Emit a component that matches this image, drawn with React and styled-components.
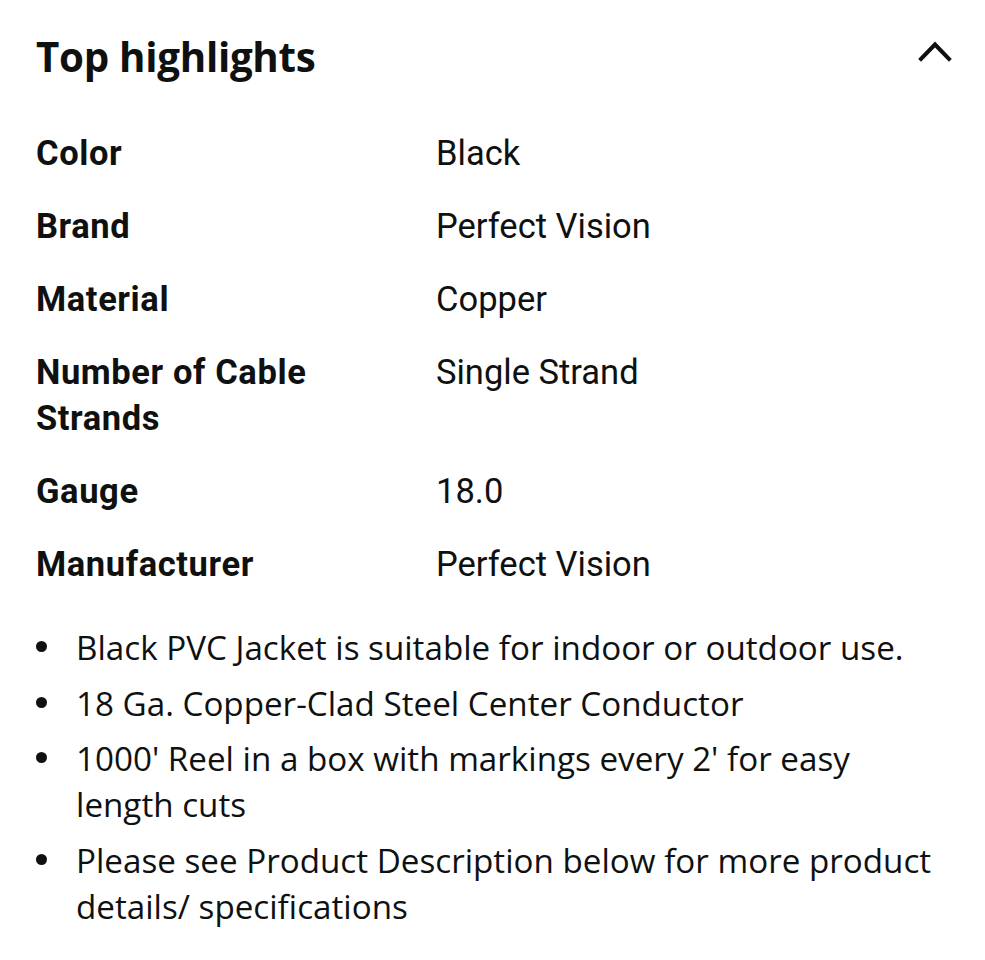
import React from 'react';
import styled, { createGlobalStyle } from 'styled-components';

const GlobalStyle = createGlobalStyle`
  body {
    margin: 0;
    background: #ffffff;
    color: #0f1111;
    font-family: "Open Sans", "Noto Sans", sans-serif;
  }
`;

const Wrapper = styled.div`
  width: 985px;
  padding: 29px 35px 0 36px;
  box-sizing: border-box;
`;

const Header = styled.div`
  display: flex;
  align-items: center;
  justify-content: space-between;
  height: 56px;
`;

const Title = styled.h2`
  margin: 0;
  font-size: 40.3px;
  font-weight: 700;
  line-height: 56px;
  letter-spacing: -0.3px;
`;

const Toggle = styled.button`
  display: flex;
  align-items: center;
  justify-content: center;
  width: 40px;
  height: 40px;
  padding: 0;
  border: 0;
  background: none;
  margin: -12px -5px 0 0;
  cursor: pointer;
`;

const Table = styled.div`
  display: grid;
  grid-template-columns: 400px 1fr;
  row-gap: 27px;
  margin-top: 45px;
  font-family: Roboto, "Noto Sans", sans-serif;
  font-size: 34.5px;
  line-height: 46px;
`;

const Label = styled.div`
  font-weight: 700;
  letter-spacing: 0.6px;
  padding-right: 80px;
`;

const Value = styled.div`
  font-weight: 400;
`;

const Bullets = styled.ul`
  list-style: none;
  margin: 38px 0 0;
  padding: 0;
  display: flex;
  flex-direction: column;
  gap: 9.5px;
`;

const Bullet = styled.li`
  position: relative;
  padding-left: 40px;
  font-size: 33.2px;
  line-height: 46px;

  &::before {
    content: '';
    position: absolute;
    left: 0;
    top: 16px;
    width: 11px;
    height: 11px;
    border-radius: 50%;
    background: #0f1111;
  }
`;

const specs = [
  ['Color', 'Black'],
  ['Brand', 'Perfect Vision'],
  ['Material', 'Copper'],
  ['Number of Cable Strands', 'Single Strand'],
  ['Gauge', '18.0'],
  ['Manufacturer', 'Perfect Vision'],
];

const points = [
  'Black PVC Jacket is suitable for indoor or outdoor use.',
  '18 Ga. Copper-Clad Steel Center Conductor',
  "1000' Reel in a box with markings every 2' for easy length cuts",
  'Please see Product Description below for more product details/ specifications',
];

const App = () => (
  <>
    <GlobalStyle />
    <Wrapper>
      <Header>
        <Title>Top highlights</Title>
        <Toggle aria-label="Collapse">
          <svg width="34" height="22" viewBox="0 0 34 22" fill="none">
            <polyline
              points="3,19 17,4.5 31,19"
              stroke="#0f1111"
              strokeWidth="4"
              strokeLinecap="square"
              strokeLinejoin="miter"
            />
          </svg>
        </Toggle>
      </Header>
      <Table>
        {specs.map(([label, value]) => (
          <React.Fragment key={label}>
            <Label>{label}</Label>
            <Value>{value}</Value>
          </React.Fragment>
        ))}
      </Table>
      <Bullets>
        {points.map(p => (
          <Bullet key={p}>{p}</Bullet>
        ))}
      </Bullets>
    </Wrapper>
  </>
);

export default App;
